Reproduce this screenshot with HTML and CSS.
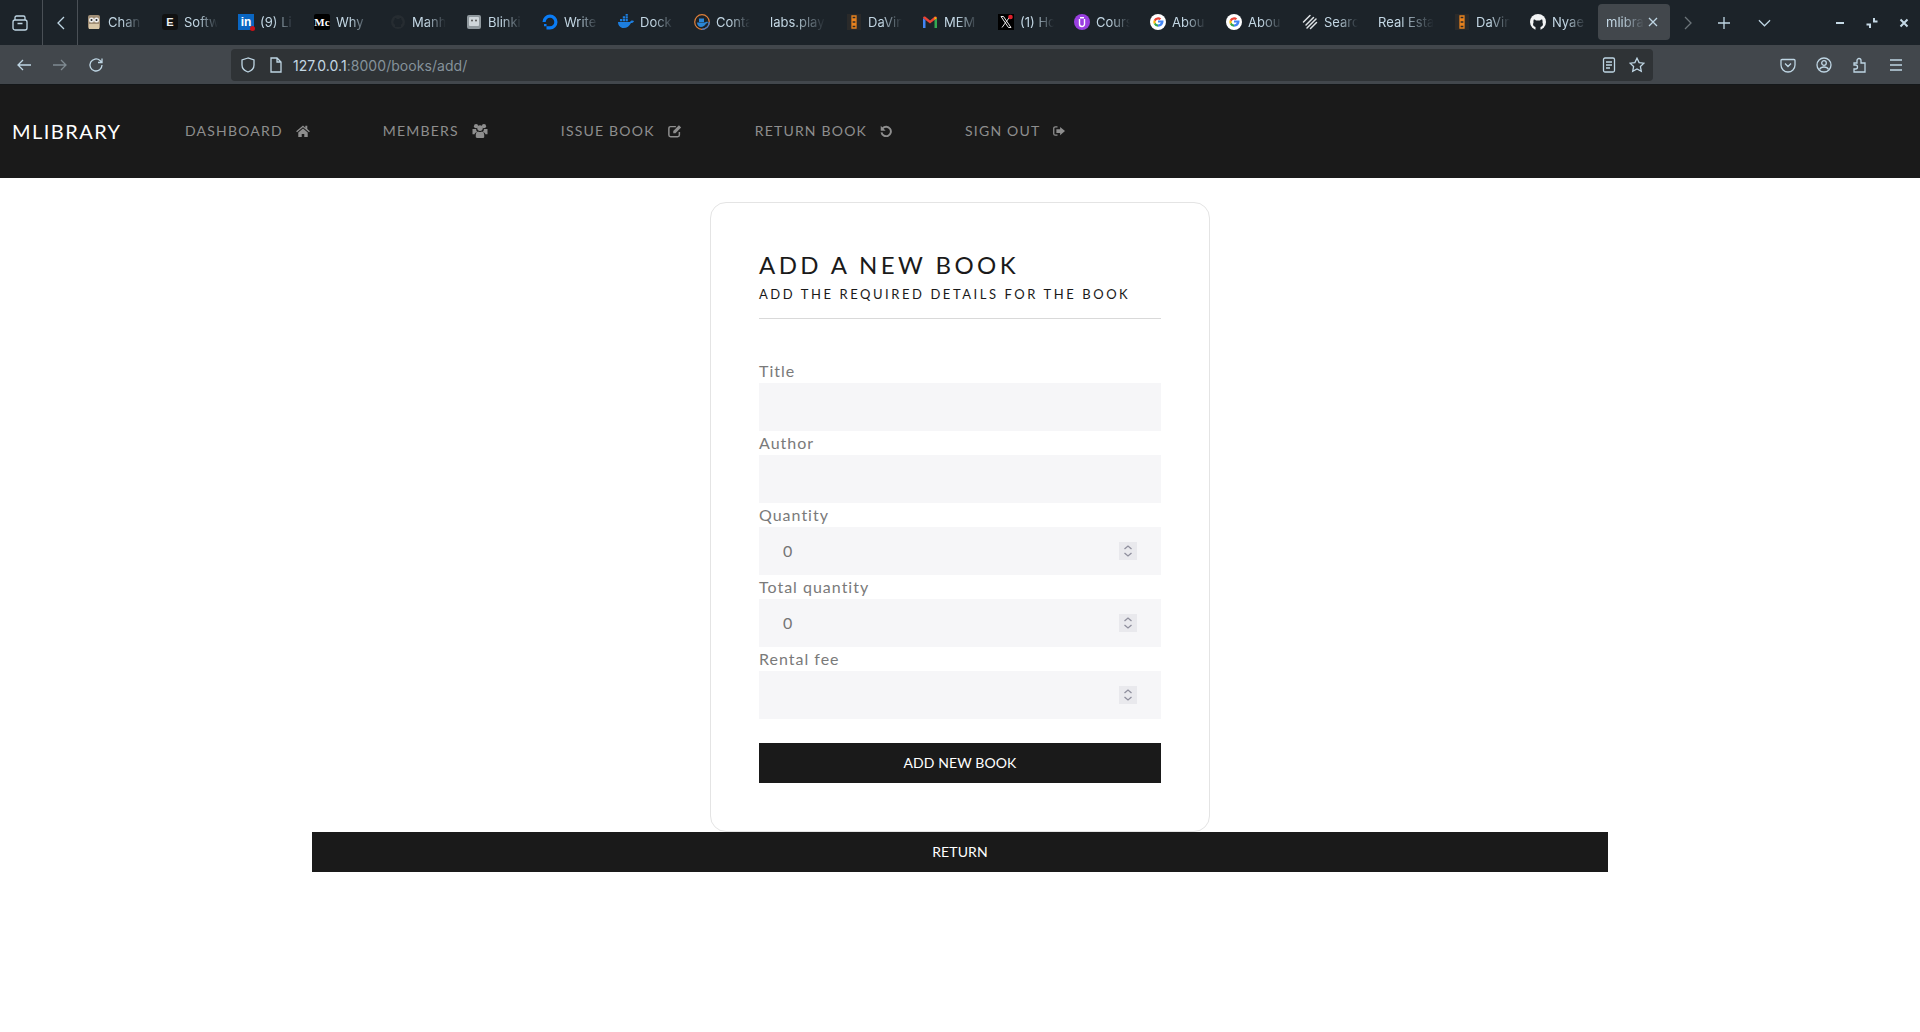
FILE: index.html
```html
<!DOCTYPE html>
<html lang="en">
<head>
<meta charset="utf-8">
<title>mlibrary</title>
<link rel="stylesheet" href="styles.css">
</head>
<body>
<header class="browser">
  <div class="tabstrip">
    <div class="strip-start">
      <svg class="ic ic-archive" viewBox="0 0 16 16"><rect x="1" y="5" width="14" height="10" rx="2"/><path d="M3 5V2.500A1.500 1.500 0 0 1 4.500 1h7A1.500 1.500 0 0 1 13 2.500V5M5.500 8.500h5"/></svg>
    </div>
    <div class="strip-back">
      <svg class="ic ic-chev" viewBox="0 0 8 14"><path d="M7 1 1 7l6 6"/></svg>
    </div>
    <div class="tabs">
      <div class="tab"><span class="fav fav-photo"><svg viewBox="0 0 16 16"><rect x="2" y="1" width="12" height="14" rx="2" fill="#a08e76"/><circle cx="5.500" cy="6" r="2.500" fill="#eee"/><circle cx="10.500" cy="6" r="2.500" fill="#eee"/><circle cx="5.500" cy="6" r="1" fill="#222"/><circle cx="10.500" cy="6" r="1" fill="#222"/><rect x="3" y="10" width="10" height="5" fill="#d8c7a8"/></svg></span><span class="tab-label">Chan</span></div>
      <div class="tab"><span class="fav fav-e">E</span><span class="tab-label">Softw</span></div>
      <div class="tab"><span class="fav fav-in">in<i class="dot"></i></span><span class="tab-label">(9) Li</span></div>
      <div class="tab"><span class="fav fav-m">Mc</span><span class="tab-label">Why</span></div>
      <div class="tab"><span class="fav"><svg viewBox="0 0 16 16"><circle cx="8" cy="8" r="7" fill="#262c31"/><path d="M5 13v-2.500C3 10 3 7 4.500 6c0-1 .2-1.500.5-2 1 0 1.500.5 2 1h2c.500-.5 1-1 2-1 .3.500.5 1 .5 2C13 7 13 10 11 10.500V13z" fill="#1c2329"/></svg></span><span class="tab-label">Manh</span></div>
      <div class="tab"><span class="fav"><svg viewBox="0 0 16 16"><rect x="1" y="1" width="14" height="14" rx="2" fill="#8f989d"/><rect x="3" y="3" width="10" height="9" rx="1" fill="#cfd6da"/><circle cx="6" cy="6.500" r="1" fill="#555"/><circle cx="10" cy="6.500" r="1" fill="#555"/></svg></span><span class="tab-label">Blinki</span></div>
      <div class="tab"><span class="fav"><svg viewBox="0 0 16 16"><path d="M8 15.500v-3.200A4.300 4.300 0 1 0 3.700 8H.5a7.500 7.500 0 1 1 7.500 7.500z" fill="#0a7cf5"/><path d="M4.500 12.300H8v3.200H4.500zM2 10h2.500v2.300H2z" fill="#0a7cf5"/></svg></span><span class="tab-label">Write</span></div>
      <div class="tab"><span class="fav"><svg viewBox="0 0 16 16"><path d="M0 8h12c.500-1.500 2.500-2 4-1-.5 1.500-1.500 2-3 2-1.500 3-4 5-7.500 5C2.500 14 0 11.500 0 8z" fill="#1d7fe0"/><path d="M2 5h2.200v2.200H2zM4.800 5H7v2.200H4.800zM7.600 5h2.200v2.200H7.600zM4.800 2.300H7v2.200H4.800zM7.600 2.300h2.200v2.200H7.600zM7.600-.4h2.200v2.200H7.600z" fill="#1d7fe0"/></svg></span><span class="tab-label">Dock</span></div>
      <div class="tab"><span class="fav"><svg viewBox="0 0 16 16"><circle cx="8" cy="8" r="7.300" fill="none" stroke="#e0803a" stroke-width="1.200"/><path d="M8 15.300A7.300 7.300 0 0 0 15.300 8" fill="none" stroke="#3a7ad8" stroke-width="1.200"/><path d="M3 8.500h8c1-1 2-1 3-.5-.5 1-1.500 1.500-2 1.500-1 2-3 3.500-5 3.500s-4-2-4-4.500z" fill="#2a86d8"/><path d="M5 4.500h5v3.500H5z" fill="#2a86d8"/></svg></span><span class="tab-label">Conta</span></div>
      <div class="tab tab-bare"><span class="tab-label tab-label-wide">labs.play</span></div>
      <div class="tab"><span class="fav"><svg viewBox="0 0 16 16"><rect x="1" y="0" width="14" height="16" fill="#2a2a2a"/><path d="M6 2h4v3H6zM6 6.500h4v3H6zM6 11h4v3H6z" fill="none" stroke="#e8821e" stroke-width="1.300"/></svg></span><span class="tab-label">DaVin</span></div>
      <div class="tab"><span class="fav"><svg viewBox="0 0 16 16"><path d="M1 14V4l2.500 2V14z" fill="#4285f4"/><path d="M15 14V4l-2.500 2V14z" fill="#34a853"/><path d="M1 4c0-1.500 1.500-2 2.500-1.200L8 6.500l4.500-3.700C13.500 2 15 2.500 15 4l-2.500 2L8 9.500 3.500 6z" fill="#ea4335"/><path d="M12.500 2.800 15 4l-2.500 2z" fill="#fbbc04"/></svg></span><span class="tab-label">MEM</span></div>
      <div class="tab"><span class="fav"><svg viewBox="0 0 16 16"><rect width="16" height="16" fill="#000"/><path d="M3 2.500h2.500L13 13.500h-2.500zM12 2.500 4 13.500" stroke="#e8e8e8" stroke-width="1" fill="none"/><circle cx="12.500" cy="3" r="2.300" fill="#e0202c"/></svg></span><span class="tab-label">(1) Ho</span></div>
      <div class="tab"><span class="fav"><svg viewBox="0 0 16 16"><circle cx="8" cy="8" r="8" fill="#9a3fe0"/><path d="M5.500 5v5a2.500 2.500 0 0 0 5 0V5" fill="none" stroke="#fff" stroke-width="1.400"/><rect x="6" y="3" width="4" height="1.500" fill="#fff"/></svg></span><span class="tab-label">Cours</span></div>
      <div class="tab"><span class="fav"><svg viewBox="0 0 16 16"><use href="#g-logo"/></svg></span><span class="tab-label">Abou</span></div>
      <div class="tab"><span class="fav"><svg viewBox="0 0 16 16"><use href="#g-logo"/></svg></span><span class="tab-label">Abou</span></div>
      <div class="tab"><span class="fav"><svg viewBox="0 0 16 16"><path d="M1.500 8 8 1.500M4 11l7.500-7.500M5 14l9-9M8.500 14.500l6-6" fill="none" stroke="#dfe3e6" stroke-width="1.500" stroke-linecap="round"/></svg></span><span class="tab-label">Searc</span></div>
      <div class="tab tab-bare"><span class="tab-label tab-label-wide">Real Esta</span></div>
      <div class="tab"><span class="fav"><svg viewBox="0 0 16 16"><rect x="1" y="0" width="14" height="16" fill="#2a2a2a"/><path d="M6 2h4v3H6zM6 6.500h4v3H6zM6 11h4v3H6z" fill="none" stroke="#e8821e" stroke-width="1.300"/></svg></span><span class="tab-label">DaVin</span></div>
      <div class="tab"><span class="fav"><svg viewBox="0 0 16 16"><circle cx="8" cy="8" r="8" fill="#f2f4f5"/><path d="M5.500 16v-3C3 12.500 2.500 10.500 3.500 8.500 3.300 7.500 3.400 6.500 3.800 5.500c1 0 1.700.500 2.400 1h3.600c.7-.5 1.400-1 2.400-1 .4 1 .5 2 .3 3 1 2 .5 4-2 4.500v3z" fill="#1c2329"/></svg></span><span class="tab-label">Nyae</span></div>
      <div class="tab tab-active"><span class="tab-label tab-label-active">mlibra</span><svg class="ic ic-x" viewBox="0 0 12 12"><path d="m2 2 8 8M10 2l-8 8"/></svg></div>
    </div>
    <div class="strip-end">
      <svg class="ic ic-chev ic-dim" viewBox="0 0 8 14"><path d="m1 1 6 6-6 6"/></svg>
      <svg class="ic ic-plus" viewBox="0 0 12 12"><path d="M6 0v12M0 6h12"/></svg>
      <svg class="ic ic-down" viewBox="0 0 14 8"><path d="m1 1 6 6 6-6"/></svg>
    </div>
    <div class="win-controls">
      <svg class="ic-win" viewBox="0 0 12 12"><path d="M2 6h8"/></svg>
      <svg class="ic-win" viewBox="0 0 12 12"><path d="M8 1v3.500h3.500M.5 7.500H4V11"/></svg>
      <svg class="ic-win" viewBox="0 0 12 12"><path d="m2.500 2.500 7 7M9.500 2.500l-7 7"/></svg>
    </div>
  </div>
  <div class="toolbar">
    <div class="tool-group">
      <svg class="ic ic-tool" viewBox="0 0 16 16"><path d="M15 8H2M7 3 2 8l5 5"/></svg>
      <svg class="ic ic-tool ic-off" viewBox="0 0 16 16"><path d="M1 8h13M9 3l5 5-5 5"/></svg>
      <svg class="ic ic-tool" viewBox="0 0 16 16"><path d="M14 8a6 6 0 1 1-2-4.500L14 5.500M14 1.500v4h-4"/></svg>
    </div>
    <div class="urlbar">
      <svg class="ic ic-tool" viewBox="0 0 16 16"><path d="M8 1 2 3v5c0 3.500 3 6 6 7 3-1 6-3.500 6-7V3z"/></svg>
      <svg class="ic ic-page" viewBox="0 0 14 16"><path d="M2 1h6l4 4v10H2zM8 1v4h4"/></svg>
      <span class="url"><b>127.0.0.1</b>:8000/books/add/</span>
      <span class="url-actions">
        <svg class="ic ic-reader" viewBox="0 0 14 16"><rect x="1.500" y="1" width="11" height="14" rx="1.500"/><path d="M4 5h6M4 8h6M4 11h4"/></svg>
        <svg class="ic ic-tool" viewBox="0 0 16 16"><path d="m8 1.200 2.100 4.400 4.800.6-3.500 3.300.9 4.800L8 12l-4.300 2.300.9-4.800L1.100 6.200l4.800-.6z"/></svg>
      </span>
    </div>
    <div class="tool-right">
      <svg class="ic ic-tool" viewBox="0 0 16 16"><path d="M2 2.500h12a1 1 0 0 1 1 1V8a7 7 0 0 1-14 0V3.500a1 1 0 0 1 1-1zM5 6.500l3 3 3-3"/></svg>
      <svg class="ic ic-tool" viewBox="0 0 16 16"><circle cx="8" cy="8" r="7"/><circle cx="8" cy="6" r="2.300"/><path d="M3.500 12.500c1-2 2.500-2.500 4.500-2.500s3.500.5 4.500 2.500"/></svg>
      <svg class="ic ic-tool" viewBox="0 0 16 16"><path d="M2 6h3V3.500a2 2 0 0 1 4 0V6h4v9H2v-3h1.500a2 2 0 0 0 0-4H2z"/></svg>
      <svg class="ic ic-tool" viewBox="0 0 16 16"><path d="M2 3h12M2 8h12M2 13h12"/></svg>
    </div>
  </div>
</header>

<svg class="defs" width="0" height="0"><defs><g id="g-logo"><circle cx="8" cy="8" r="8" fill="#fff"/><path d="M8 6.500h5.500c.3 3.500-2 6.200-5.500 6.200V10.500c1.300 0 2.400-.6 2.800-1.900H8z" fill="#4285f4"/><path d="M8 12.700a4.700 4.700 0 0 1-4.200-2.600l1.900-1.300c.4 1 1.200 1.700 2.300 1.700z" fill="#34a853"/><path d="M3.800 10.100a4.700 4.700 0 0 1 0-4.200l1.900 1.400a2.500 2.500 0 0 0 0 1.500z" fill="#fbbc04"/><path d="M3.800 5.900A4.700 4.700 0 0 1 11.200 4.600L9.600 6.100A2.500 2.500 0 0 0 5.700 7.300z" fill="#ea4335"/></g></defs></svg>

<nav class="site-nav">
  <a class="brand" href="#">MLIBRARY</a>
  <ul class="nav-list">
    <li><a class="nav-link" href="#">DASHBOARD <svg class="nav-ic nav-ic-home" viewBox="0 0 16 14"><path d="M8 .5 0 7.300l1 1.200L8 2.600l7 5.900 1-1.200-3-2.500V1h-2.300v2.200zM2.500 8.700V14h4v-3.500h3V14h4V8.700L8 4z"/></svg></a></li>
    <li><a class="nav-link" href="#">MEMBERS <svg class="nav-ic nav-ic-users" viewBox="0 0 16 16"><circle cx="3.800" cy="3.400" r="2.300"/><circle cx="12.200" cy="3.400" r="2.300"/><circle cx="8" cy="5.400" r="3"/><path d="M0 6.500h3.800c0 1.200.4 2.300 1.200 3C3.300 9.800 2.300 11 2.300 12H0zM16 6.500h-3.800c0 1.200-.4 2.300-1.200 3 1.700.3 2.700 1.500 2.700 2.500H16zM3.500 12.500c0-2 1.500-3.500 2.500-3.500 1 .8 3 .8 4 0 1 0 2.500 1.500 2.500 3.500V15c0 .5-.5 1-1 1h-7c-.5 0-1-.5-1-1z"/></svg></a></li>
    <li><a class="nav-link" href="#">ISSUE BOOK <svg class="nav-ic" viewBox="0 0 16 16"><path class="nav-stroke" d="M13 9v3.500A2 2 0 0 1 11 14.500H3a2 2 0 0 1-2-2V5a2 2 0 0 1 2-2h6"/><path d="m6 8 6.500-6.500 2.500 2.500L8.500 10.500H6z"/></svg></a></li>
    <li><a class="nav-link" href="#">RETURN BOOK <svg class="nav-ic nav-ic-narrow" viewBox="0 0 16 16"><path class="nav-stroke-bold" d="M3.500 4.500A6.300 6.300 0 1 1 2 9.800"/><path d="M1 1v6.500h6.500z"/></svg></a></li>
    <li><a class="nav-link" href="#">SIGN OUT <svg class="nav-ic nav-ic-narrow" viewBox="0 0 16 16"><path class="nav-stroke" d="M6 2.500H3a2 2 0 0 0-2 2v7a2 2 0 0 0 2 2h3"/><path d="M9.500 2.500 16 8l-6.500 5.500v-3H4.500v-5h5z"/></svg></a></li>
  </ul>
</nav>

<main class="page">
  <section class="card">
    <h1 class="card-title">ADD A NEW BOOK</h1>
    <p class="card-sub">ADD THE REQUIRED DETAILS FOR THE BOOK</p>
    <hr class="rule">
    <form class="book-form">
      <label class="field"><span class="field-label">Title</span><span class="control"><input class="input" type="text"></span></label>
      <label class="field"><span class="field-label">Author</span><span class="control"><input class="input" type="text"></span></label>
      <label class="field"><span class="field-label">Quantity</span><span class="control"><input class="input" type="text" value="0"><span class="spin"><svg viewBox="0 0 18 18"><path d="m5.500 7 3.500-3 3.500 3M5.500 11l3.500 3 3.500-3"/></svg></span></span></label>
      <label class="field"><span class="field-label">Total quantity</span><span class="control"><input class="input" type="text" value="0"><span class="spin"><svg viewBox="0 0 18 18"><path d="m5.500 7 3.500-3 3.500 3M5.500 11l3.500 3 3.500-3"/></svg></span></span></label>
      <label class="field"><span class="field-label">Rental fee</span><span class="control"><input class="input" type="text"><span class="spin"><svg viewBox="0 0 18 18"><path d="m5.500 7 3.500-3 3.500 3M5.500 11l3.500 3 3.500-3"/></svg></span></span></label>
      <button class="btn btn-submit" type="button">ADD NEW BOOK</button>
    </form>
  </section>
  <a class="btn btn-return" href="#">RETURN</a>
</main>
</body>
</html>
```

FILE: styles.css
```css
* { box-sizing: border-box; }
html, body { margin: 0; padding: 0; }
body {
  height: 1032px;
  overflow: hidden;
  background: #fff;
  font-family: "Lato", "Liberation Sans", sans-serif;
  color: #1a1a1a;
}
.defs { position: absolute; }

/* browser chrome */
.browser { height: 85px; font-family: "Inter", "Liberation Sans", sans-serif; }
.tabstrip { display: flex; height: 45px; background: #1c2329; }
.ic { fill: none; stroke: #bfd6e4; stroke-width: 1.3; display: block; flex: none; }
.strip-start {
  width: 43px; height: 45px; display: flex; align-items: center; justify-content: center;
  border-right: 1px solid #4a5056;
  padding-right: 2px;
}
.ic-archive { width: 16px; height: 16px; }
.strip-back {
  width: 35px; height: 45px; display: flex; align-items: center; justify-content: center;
  border-right: 1px solid #4a5056;
  padding-left: 2px;
}
.ic-chev { width: 8px; height: 14px; }
.ic-dim { stroke: #6c7479; }
.tabs { display: flex; gap: 4px; padding-top: 4px; }
.tab {
  width: 72px; height: 36px; display: flex; align-items: center; gap: 6px;
  padding-left: 8px; border-radius: 4px; flex: none;
}
.tab-active { background: #42474c; width: 72px; gap: 3px; }
.fav { width: 16px; height: 16px; flex: none; display: block; position: relative; }
.fav svg { width: 16px; height: 16px; display: block; }
.fav-e, .fav-m, .fav-in {
  font-family: "Liberation Sans", sans-serif; font-weight: 700; text-align: center; overflow: hidden;
}
.fav-e { background: #111; color: #eee; font-size: 11px; line-height: 16px; border-radius: 3px; }
.fav-m { background: #000; color: #fff; font-size: 11px; line-height: 16px; font-family: "Liberation Serif", serif; border-radius: 2px; }
.fav-in { background: #0a66c2; color: #fff; font-size: 12px; line-height: 17px; overflow: visible; }
.dot { position: absolute; right: -1px; bottom: -1px; width: 5px; height: 5px; border-radius: 50%; background: #cc1016; }
.tab-label {
  display: block; width: 34px; overflow: hidden; white-space: nowrap;
  font-size: 13px; color: #c3d7e4;
  -webkit-mask-image: linear-gradient(to right, #000 40%, transparent 100%);
  mask-image: linear-gradient(to right, #000 40%, transparent 100%);
}
.tab-label-wide { width: 56px; }
.tab-label-active { width: 38px; flex: none; }
.ic-x { width: 12px; height: 12px; }
.strip-end { display: flex; align-items: center; margin-left: 14px; }
.ic-plus { width: 12px; height: 12px; margin-left: 26px; }
.ic-down { width: 13px; height: 8px; margin-left: 28px; }
.win-controls { display: flex; align-items: center; margin-left: auto; gap: 20px; padding-right: 10px; }
.ic-win { width: 12px; height: 12px; fill: none; stroke: #c5d9e6; stroke-width: 2; display: block; }

.toolbar {
  height: 40px; display: flex; align-items: center; padding: 0 16px 0 16px;
  background: #42474c; border-bottom: 1px solid #15181a;
}
.tool-group { display: flex; gap: 20px; width: 215px; }
.ic-tool { width: 16px; height: 16px; }
.ic-off { stroke: #7f8a91; }
.urlbar {
  width: 1422px; height: 32px; background: #2f3336; border-radius: 4px;
  display: flex; align-items: center; padding-left: 9px; gap: 13px;
}
.ic-page { width: 14px; height: 16px; }
.url { font-size: 14px; color: #85929b; letter-spacing: 0.05px; margin-left: -3px; padding-top: 1px; }
.url b { font-weight: 400; color: #c3d7e4; }
.url-actions { margin-left: auto; display: flex; align-items: center; gap: 13px; padding-right: 8px; }
.ic-reader { width: 14px; height: 16px; }
.tool-right { display: flex; margin-left: auto; gap: 20px; }

/* site nav */
.site-nav {
  height: 93px; background: #1a1a1a; display: flex; align-items: center; padding: 0 0 2px 12px;
}
.brand { color: #fff; font-size: 20px; letter-spacing: 1.45px; text-decoration: none; width: 173px; }
.nav-list { display: flex; gap: 73px; list-style: none; margin: 0; padding: 0; }
.nav-link {
  display: flex; align-items: center; gap: 13px; color: #8e8e8e; text-decoration: none;
  font-size: 14px; letter-spacing: 1.2px; white-space: nowrap;
}
.nav-ic { width: 14px; height: 14px; fill: #8e8e8e; display: block; }
.nav-ic-home { width: 14px; height: 12px; }
.nav-ic-users { width: 16px; height: 15px; }
.nav-ic-narrow { width: 12px; height: 12px; }
.nav-stroke { fill: none; stroke: #8e8e8e; stroke-width: 1.700; }
.nav-stroke-bold { fill: none; stroke: #8e8e8e; stroke-width: 2.600; }

/* page */
.page { display: flex; flex-direction: column; align-items: center; padding-top: 24px; }
.card {
  width: 500px; height: 630px; padding: 48px; border: 1px solid #e4e4e4; border-radius: 16px; background: #fff;
}
.card-title {
  margin: 0; font-size: 24px; line-height: 28px; font-weight: 400; letter-spacing: 3.400px; color: #1a1a1a;
}
.card-sub {
  margin: 5px 0 0; font-size: 13px; line-height: 20px; letter-spacing: 2.560px; color: #1a1a1a;
}
.rule { margin: 14px 0 40px; border: 0; border-top: 1px solid #d9d9d9; }
.book-form { display: flex; flex-direction: column; }
.field { display: block; }
.field-label { display: block; height: 24px; line-height: 23px; font-size: 16px; letter-spacing: 1px; color: #7a7a7a; }
.control { display: block; position: relative; height: 48px; }
.input {
  display: block; width: 100%; height: 48px; border: 0; background: #f6f6f8; padding: 0 24px 2px;
  font: inherit; font-size: 16px; letter-spacing: 1px; color: #757575; border-radius: 0; outline: 0;
}
.spin {
  position: absolute; right: 24px; top: 15px; width: 18px; height: 18px; background: #e9e9ed;
}
.spin svg { display: block; width: 18px; height: 18px; fill: none; stroke: #8f8f9d; stroke-width: 1.300; }
.btn {
  display: block; background: #1a1a1a; color: #fff; border: 0; text-align: center; text-decoration: none;
  height: 40px; line-height: 40px; font-family: inherit; font-size: 14px; letter-spacing: 0.1px; padding: 0;
}
.btn-submit { width: 100%; margin-top: 24px; }
.btn-return { width: 1296px; }
```
